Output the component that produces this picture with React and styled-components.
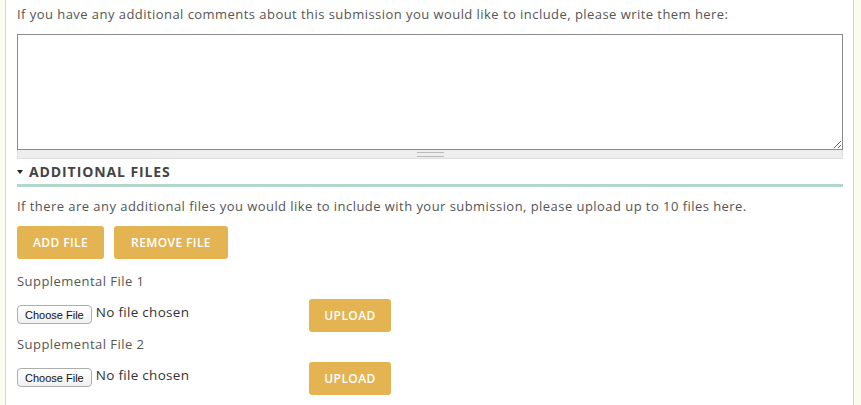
import styled, { createGlobalStyle } from "styled-components";

const Global = createGlobalStyle`
  html, body {
    margin: 0;
    background: #fafcee;
  }
  body {
    font-family: "Open Sans", "Liberation Sans", sans-serif;
    color: #444;
  }
`;

const Page = styled.div`
  padding: 0 7px 0 5px;
  height: 405px;
  overflow: hidden;
`;

const Panel = styled.div`
  background: #fff;
  border-left: 1px solid #d4d4d4;
  border-right: 1px solid #d4d4d4;
  padding: 6px 10px 20px 11px;
  min-height: 405px;
  box-sizing: border-box;
`;

const Text = styled.p`
  margin: 0;
  font-size: 13px;
  line-height: 16px;
  letter-spacing: 0.45px;
  color: #555;
`;

const CommentBox = styled.div`
  margin-top: 12px;
  display: flex;
  flex-direction: column;
`;

const Area = styled.textarea`
  display: block;
  height: 116px;
  border: 1px solid #8a8a8a;
  resize: vertical;
  padding: 4px;
  box-sizing: border-box;
  font: inherit;
  margin: 0;
`;

const Grip = styled.div`
  height: 8px;
  background: #eeeeee;
  border: 1px solid #dddddd;
  border-top: none;
  display: flex;
  align-items: center;
  justify-content: center;
  &::after {
    content: "";
    width: 27px;
    height: 3px;
    border-top: 1px solid #bbb;
    border-bottom: 1px solid #bbb;
  }
`;

const Heading = styled.h3`
  margin: 4px 0 0;
  padding-bottom: 3px;
  border-bottom: 3px solid #b3d8cb;
  font-size: 14px;
  line-height: 18px;
  font-weight: 700;
  letter-spacing: 0.9px;
  color: #444;
  display: flex;
  align-items: center;
  gap: 6px;
  &::before {
    content: "";
    border-left: 3px solid transparent;
    border-right: 3px solid transparent;
    border-top: 4px solid #222;
  }
`;

const Intro = styled(Text)`
  margin-top: 11px;
`;

const Actions = styled.div`
  display: flex;
  gap: 10px;
  margin-top: 12px;
`;

const Gold = styled.button`
  background: #e3b451;
  color: #fff;
  border: none;
  border-radius: 3px;
  font-family: inherit;
  font-size: 12px;
  font-weight: 600;
  letter-spacing: 0.4px;
  height: 33px;
  width: ${(p) => p.$w}px;
  padding: 0;
  cursor: pointer;
`;

const Label = styled(Text)`
  margin-top: ${(p) => p.$top}px;
`;

const FileRow = styled.div`
  display: grid;
  grid-template-columns: 292px auto;
  align-items: start;
  margin-top: 10px;
`;

const FileInput = styled.div`
  display: flex;
  align-items: flex-start;
  gap: 4px;
  padding-top: 6px;
`;

const Choose = styled.span`
  font-family: "Liberation Sans", Arial, sans-serif;
  font-size: 11px;
  color: #111;
  border: 1px solid #adadad;
  border-radius: 4px;
  background: linear-gradient(#fff, #f1f1f1);
  padding: 3px 7px 2px;
  line-height: 12px;
`;

const NoFile = styled.span`
  font-size: 13.5px;
  letter-spacing: 0.3px;
  color: #333;
  line-height: 14px;
`;

const files = ["Supplemental File 1", "Supplemental File 2"];

export default function App() {
  return (
    <Page>
      <Global />
      <Panel>
        <Text>
          If you have any additional comments about this submission you would
          like to include, please write them here:
        </Text>
        <CommentBox>
          <Area />
          <Grip />
        </CommentBox>
        <Heading>ADDITIONAL FILES</Heading>
        <Intro>
          If there are any additional files you would like to include with your
          submission, please upload up to 10 files here.
        </Intro>
        <Actions>
          <Gold $w={87}>ADD FILE</Gold>
          <Gold $w={114}>REMOVE FILE</Gold>
        </Actions>
        {files.map((f, i) => (
          <div key={f}>
            <Label $top={i === 0 ? 14 : 4}>{f}</Label>
            <FileRow>
              <FileInput>
                <Choose>Choose File</Choose>
                <NoFile>No file chosen</NoFile>
              </FileInput>
              <Gold $w={82}>UPLOAD</Gold>
            </FileRow>
          </div>
        ))}
      </Panel>
    </Page>
  );
}
